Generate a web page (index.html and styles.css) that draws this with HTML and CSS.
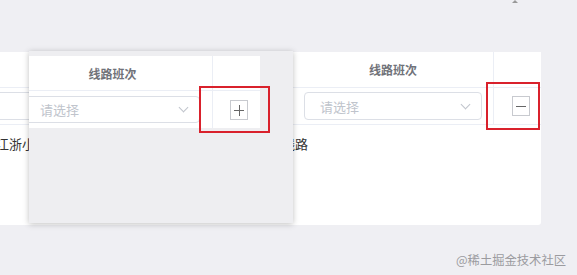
FILE: index.html
```html
<!DOCTYPE html>
<html lang="zh-CN">
<head>
  <meta charset="UTF-8" />
  <title>线路班次</title>
  <link rel="stylesheet" href="styles.css">
</head>
<body>
  <div class="scroll-up"></div>

  <div class="table">
    <div class="row head">
      <div class="cell"></div>
      <div class="cell title">线路班次</div>
      <div class="cell op"></div>
    </div>
    <div class="row body">
      <div class="cell">
        <div class="select left-select"><span>请选择</span><i class="arrow"></i></div>
      </div>
      <div class="cell">
        <div class="select"><span>请选择</span><i class="arrow"></i></div>
      </div>
      <div class="cell op">
        <button class="btn-icon minus"></button>
      </div>
    </div>
    <div class="line-name">江浙小商品城至上海虹桥枢纽客运站城际公交专线线路</div>
  </div>

  <!-- dragged row preview -->
  <div class="drag-ghost">
    <div class="ghost-table">
      <div class="row ghost-head">
        <div class="cell title">线路班次</div>
        <div class="cell op"></div>
      </div>
      <div class="row ghost-body">
        <div class="cell">
          <div class="select ghost-select"><span>请选择</span><i class="arrow"></i></div>
        </div>
        <div class="cell op">
          <button class="btn-icon plus"></button>
        </div>
      </div>
    </div>
  </div>

  <div class="mark mark-plus"></div>
  <div class="mark mark-minus"></div>

  <div class="watermark">@稀土掘金技术社区</div>
</body>
</html>
```

FILE: styles.css
```css
* {
  box-sizing: border-box;
  font-family: "Noto Sans CJK SC", "Noto Sans", sans-serif;
}
body {
  margin: 0;
  width: 577px;
  height: 275px;
  overflow: hidden;
  background: #efeff3;
  position: relative;
}
.scroll-up {
  position: absolute;
  left: 512px;
  top: 0;
  border-left: 3px solid transparent;
  border-right: 3px solid transparent;
  border-bottom: 3px solid #999;
}
.table {
  margin-top: 52px;
  width: 541px;
  height: 173px;
  background: #fff;
  border-radius: 0 0 3px 0;
  overflow: hidden;
}
.row {
  display: grid;
  grid-template-columns: 293px 200px 48px;
  border-bottom: 1px solid #ebeef5;
}
.row.head {
  height: 36px;
}
.row.body {
  height: 37px;
  align-items: center;
}
.cell {
  height: 100%;
  display: flex;
  align-items: center;
}
.cell.op {
  border-left: 1px solid #ebeef5;
  justify-content: center;
}
.title {
  justify-content: center;
  font-size: 12px;
  font-weight: 700;
  color: #707279;
}
.select {
  display: flex;
  align-items: center;
  justify-content: space-between;
  height: 28px;
  width: 178px;
  margin-left: 11px;
  padding: 0 12px 0 15px;
  border: 1px solid #dcdfe6;
  border-radius: 4px;
  background: #fff;
  font-size: 13px;
  color: #c0c4cc;
}
.left-select {
  width: 100%;
  margin-left: -4px;
  padding-left: 44px;
}
.arrow {
  width: 7px;
  height: 7px;
  border-right: 1px solid #c0c4cc;
  border-bottom: 1px solid #c0c4cc;
  transform: rotate(45deg);
  margin-top: -4px;
}
.btn-icon {
  position: relative;
  width: 18px;
  height: 20px;
  padding: 0;
  border: 1px solid #c8cacf;
  background: #fff;
  margin-left: 6px;
}
.btn-icon::before {
  content: "";
  position: absolute;
  left: 3px;
  top: 9px;
  width: 10px;
  height: 1px;
  background: #666;
}
.plus::after {
  content: "";
  position: absolute;
  left: 8px;
  top: 4px;
  width: 1px;
  height: 11px;
  background: #666;
}
.line-name {
  margin: 10px 0 0 -4px;
  white-space: nowrap;
  font-size: 13px;
  line-height: 18px;
  color: #333;
}
.drag-ghost {
  position: absolute;
  left: 29px;
  top: 51px;
  width: 264px;
  height: 172px;
  padding-top: 5px;
  background: #eeeef1;
  box-shadow: 0 1px 6px rgba(0, 0, 0, 0.25);
  overflow: hidden;
}
.ghost-table {
  width: 231px;
  background: #fff;
}
.ghost-table .row {
  grid-template-columns: 183px 48px;
}
.ghost-head {
  height: 35px;
}
.ghost-head .title {
  padding-right: 16px;
}
.ghost-body {
  height: 37px;
  border-bottom: none !important;
}
.ghost-select {
  width: 175px;
  margin-left: -4px;
  height: 27px;
  padding-left: 14px;
}
.ghost-body .btn-icon {
  margin-left: 4px;
  margin-top: 1px;
}
.mark {
  position: absolute;
  border: 2px solid #d9212c;
}
.mark-plus {
  left: 199px;
  top: 86px;
  width: 71px;
  height: 47px;
}
.mark-minus {
  left: 486px;
  top: 82px;
  width: 54px;
  height: 48px;
}
.watermark {
  position: absolute;
  right: 11px;
  top: 251px;
  font-size: 12.3px;
  color: #9b9b9f;
  white-space: nowrap;
}
```
